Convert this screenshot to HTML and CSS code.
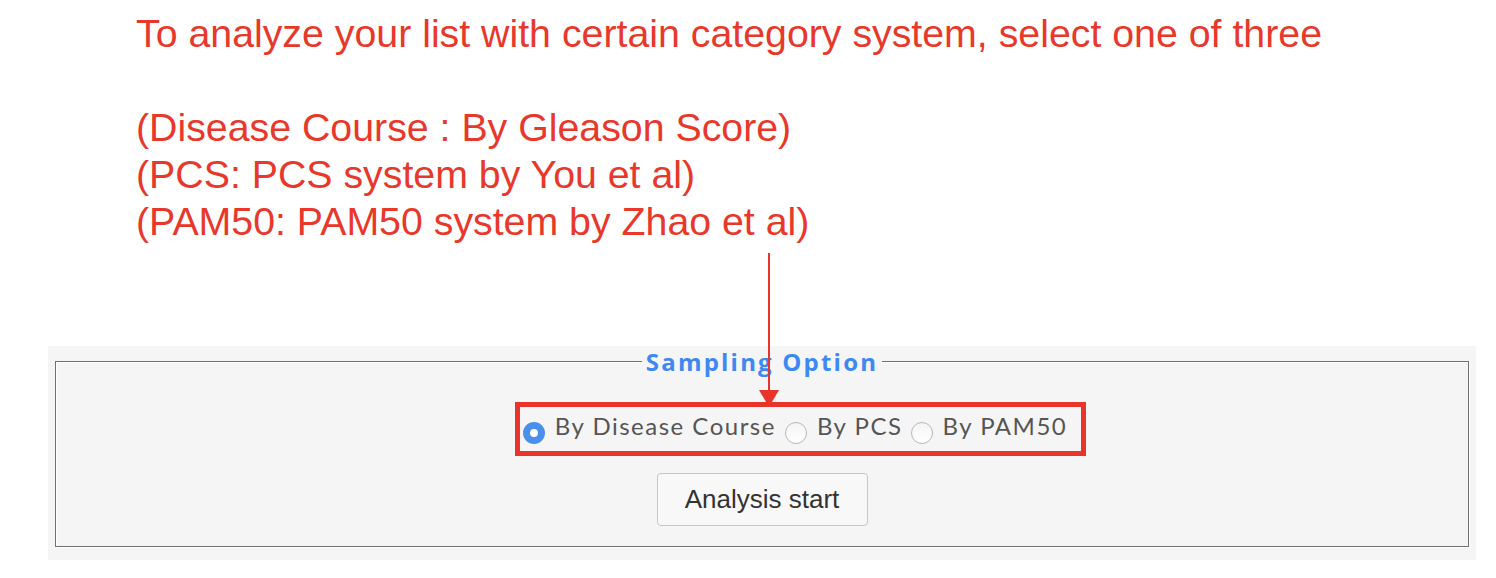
FILE: index.html
```html
<!DOCTYPE html>
<html lang="en">
<head>
<meta charset="utf-8">
<title>Sampling Option</title>
<link rel="stylesheet" href="styles.css">
</head>
<body>
<div class="note">
  <p>To analyze your list with certain category system, select one of three</p>
  <p class="blank">&nbsp;</p>
  <p>(Disease Course : By Gleason Score)</p>
  <p>(PCS: PCS system by You et al)</p>
  <p>(PAM50: PAM50 system by Zhao et al)</p>
</div>

<div class="panel">
  <fieldset class="sampling">
    <legend class="sampling-title">Sampling Option</legend>
    <div class="sampling-body">
      <div class="options">
        <label class="option"><span class="radio checked"></span><span class="option-text t1">By Disease Course</span></label>
        <label class="option"><span class="radio"></span><span class="option-text t2">By PCS</span></label>
        <label class="option"><span class="radio"></span><span class="option-text t3">By PAM50</span></label>
      </div>
      <button class="start" type="button">Analysis start</button>
    </div>
  </fieldset>
</div>

<div class="arrow"><span class="arrow-line"></span><span class="arrow-head"></span></div>
</body>
</html>
```

FILE: styles.css
```css
html, body {
  margin: 0;
  padding: 0;
  background: #ffffff;
}

body {
  position: relative;
  width: 1496px;
  height: 578px;
  overflow: hidden;
}

.note {
  padding: 10px 0 0 136px;
  font-family: "Liberation Sans", Arial, sans-serif;
  font-size: 39.3px;
  line-height: 47px;
  color: #e8382c;
}

.note p {
  margin: 0;
  white-space: nowrap;
}

.panel {
  margin: 101px 0 0 48px;
  width: 1428px;
  height: 214px;
  background: #f5f5f5;
  box-sizing: border-box;
  padding: 0 7px;
}

.sampling {
  margin: 0;
  padding: 0 0 20px 0;
  border: 1px solid #707070;
  box-shadow: inset 1px 1px 0 #ffffff, 1px 1px 0 #ffffff;
  min-width: 0;
}

.sampling-title {
  margin: 0 auto;
  padding: 0 4px 0 4px;
  font-family: "Open Sans", sans-serif;
  font-weight: 700;
  font-size: 24px;
  line-height: 31px;
  color: #3d88f2;
  background: #f5f5f5;
  letter-spacing: 2.2px;
}

.sampling-body {
  display: flex;
  flex-direction: column;
  align-items: center;
  padding-top: 25px;
}

.options {
  display: flex;
  align-items: flex-start;
  height: 44px;
  padding: 0 14px 0 3px;
  margin-left: 77px;
  border: 5px solid #e8342a;
}

.option {
  display: flex;
  align-items: flex-start;
}

.radio {
  box-sizing: border-box;
  width: 22px;
  height: 22px;
  margin-top: 15px;
  border-radius: 50%;
  border: 1px solid #b8b8b8;
  background: linear-gradient(#f4f4f4, #ffffff);
  flex: none;
}

.radio.checked {
  border: 7.5px solid #4a90ea;
  background: #ffffff;
}

.option-text {
  font-family: Lato, sans-serif;
  font-size: 24px;
  line-height: 24px;
  margin-top: 7px;
  color: #555555;
  white-space: nowrap;
  letter-spacing: 1.5px;
}

.t1 { margin-left: 10px; margin-right: 9px; }
.t2 { margin-left: 10px; margin-right: 8px; }
.t3 { margin-left: 10px; }

.start {
  margin-top: 17px;
  width: 211px;
  height: 53px;
  padding: 0;
  font-family: "Liberation Sans", Arial, sans-serif;
  font-size: 26px;
  color: #333333;
  background: #f8f8f8;
  border: 1px solid #c6c6c6;
  border-radius: 4px;
}

.arrow {
  position: absolute;
  left: 759px;
  top: 253px;
  width: 20px;
  height: 155px;
}

.arrow-line {
  position: absolute;
  left: 9px;
  top: 0;
  width: 2px;
  height: 140px;
  background: #e8342a;
}

.arrow-head {
  position: absolute;
  left: 0;
  top: 137px;
  width: 0;
  height: 0;
  border-left: 10px solid transparent;
  border-right: 10px solid transparent;
  border-top: 17px solid #e8342a;
}
```
